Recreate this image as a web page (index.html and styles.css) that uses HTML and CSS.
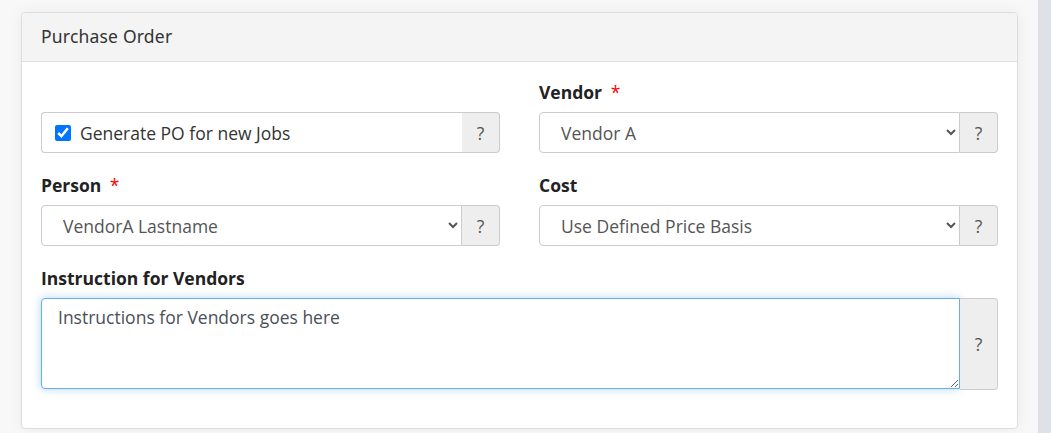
FILE: index.html
```html
<!DOCTYPE html>
<html lang="en">
<head>
    <meta charset="UTF-8">
    <meta name="viewport" content="width=device-width, initial-scale=1.0">
    <title>Purchase Order</title>
    <link rel="stylesheet" href="styles.css">
</head>
<body>

    <div class="page">
        <div class="card">
            <div class="card-header">Purchase Order</div>

            <div class="card-body">
                <!-- Checkbox -->
                <div class="form-group align-end">
                    <div class="input-group">
                        <label class="check-box">
                            <input type="checkbox" checked>
                            <span>Generate PO for new Jobs</span>
                        </label>
                        <span class="addon">?</span>
                    </div>
                </div>

                <div class="form-group">
                    <label class="field-label">Vendor <span class="required">*</span></label>
                    <div class="input-group">
                        <select class="control">
                            <option>Vendor A</option>
                        </select>
                        <span class="addon">?</span>
                    </div>
                </div>

                <div class="form-group">
                    <label class="field-label">Person <span class="required">*</span></label>
                    <div class="input-group">
                        <select class="control">
                            <option>VendorA Lastname</option>
                        </select>
                        <span class="addon">?</span>
                    </div>
                </div>

                <div class="form-group">
                    <label class="field-label">Cost</label>
                    <div class="input-group">
                        <select class="control">
                            <option>Use Defined Price Basis</option>
                        </select>
                        <span class="addon">?</span>
                    </div>
                </div>

                <!-- Instructions -->
                <div class="form-group full">
                    <label class="field-label">Instruction for Vendors</label>
                    <div class="input-group">
                        <textarea class="control area">Instructions for Vendors goes here</textarea>
                        <span class="addon">?</span>
                    </div>
                </div>
            </div>
        </div>
    </div>

    <div class="scroll-strip"></div>

</body>
</html>
```

FILE: styles.css
```css
body {
    margin: 0;
    padding: 0;
    font-family: 'Open Sans', sans-serif;
    font-size: 17.5px;
    color: #333;
    background: #f8f8f8;
    display: flex;
    height: 433px;
    overflow: hidden;
}

.page {
    flex: 1;
    padding: 12px 20px 0 21px;
}

.scroll-strip {
    width: 13px;
    background: #dee2e6;
}

.card {
    background: #fff;
    border: 1px solid #ddd;
    border-radius: 4px;
    box-shadow: 0 0 14px rgba(0, 0, 0, 0.06);
}

.card-header {
    background: #f4f4f4;
    border-bottom: 1px solid #ddd;
    border-radius: 4px 4px 0 0;
    padding: 11px 19px 12px;
    height: 25px;
    line-height: 25px;
    font-family: 'Noto Sans', sans-serif;
    font-size: 17.5px;
    letter-spacing: 0.2px;
    color: #333;
}

.card-body {
    display: grid;
    grid-template-columns: 1fr 1fr;
    column-gap: 39px;
    row-gap: 20px;
    padding: 18px 19px 38px;
}

.form-group {
    display: flex;
    flex-direction: column;
}

.form-group.align-end {
    justify-content: flex-end;
}

.form-group.full {
    grid-column: 1 / 3;
}

.field-label {
    font-weight: 700;
    line-height: 24px;
    margin-bottom: 8px;
    color: #222;
}

.required {
    color: #f00;
    font-weight: 400;
    margin-left: 4px;
}

.input-group {
    display: flex;
    height: 41px;
}

.check-box {
    flex: 1;
    display: flex;
    align-items: center;
    gap: 9px;
    padding-left: 13px;
    border: 1px solid #ccc;
    border-right: none;
    border-radius: 4px 0 0 4px;
    color: #333;
}

.check-box input {
    width: 16px;
    height: 16px;
    margin: 0;
    accent-color: #0075ff;
}

.control {
    flex: 1;
    min-width: 0;
    border: 1px solid #ccc;
    border-radius: 4px 0 0 4px;
    background: #fff;
    font-family: 'Open Sans', sans-serif;
    font-size: 17.5px;
    color: #555;
    padding: 0 8px 0 17px;
    box-sizing: border-box;
    height: 41px;
}

.addon {
    width: 37px;
    display: flex;
    align-items: center;
    justify-content: center;
    background: #eee;
    border: 1px solid #ccc;
    border-left: none;
    border-radius: 0 4px 4px 0;
    color: #555;
}

.input-group:has(.area) {
    height: 92px;
}

.area {
    height: 91px;
    resize: vertical;
    padding: 6px 16px;
    line-height: 24px;
    border-color: #66afe9;
    outline: none;
    box-shadow: 0 0 8px rgba(102, 175, 233, 0.5);
    color: #495057;
}
```
